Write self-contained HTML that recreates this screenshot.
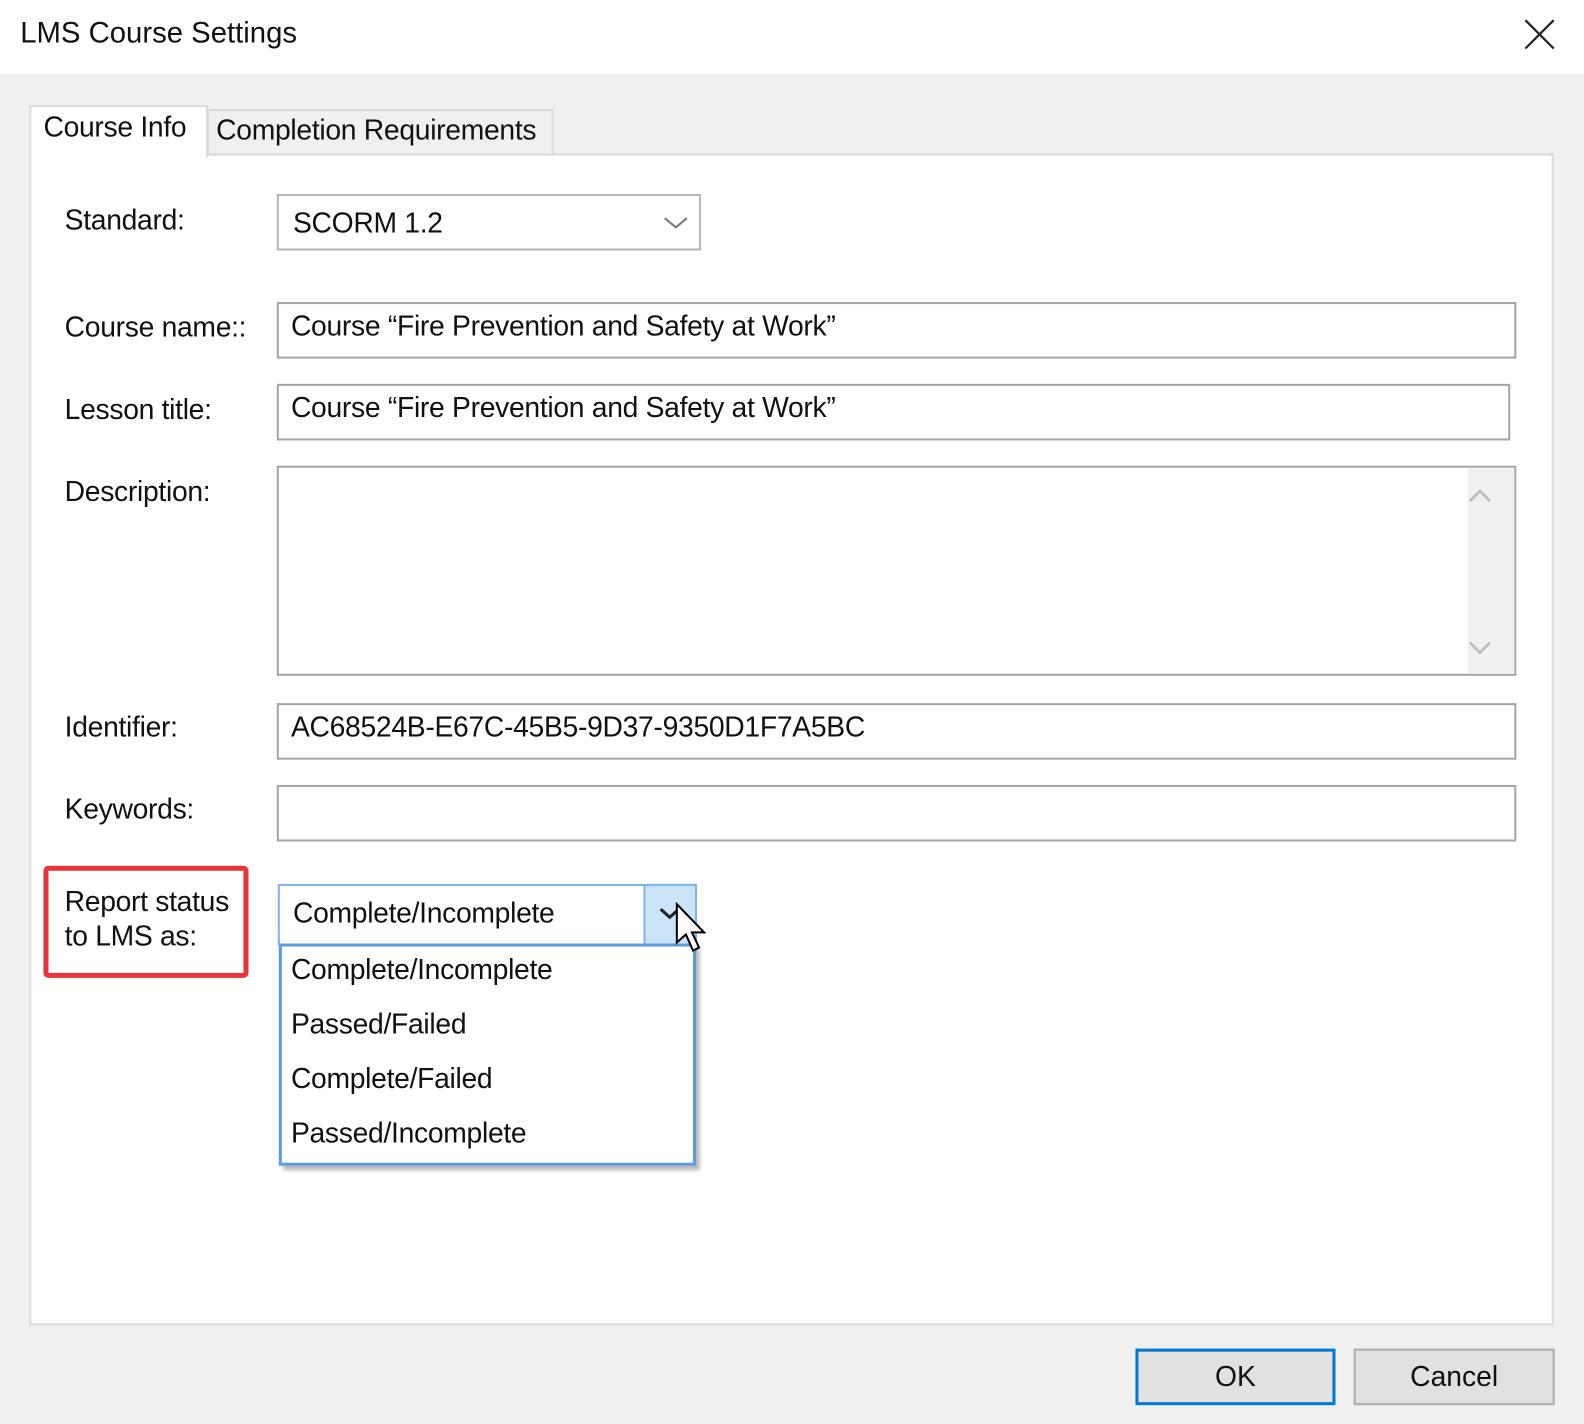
<!DOCTYPE html>
<html><head><style>
*{box-sizing:border-box;margin:0;padding:0}
body{width:1584px;height:1424px;background:#f0f0f0;font-family:"Liberation Sans",sans-serif;color:#111;position:relative;overflow:hidden;font-size:28px}
#w{position:absolute;left:0;top:0;width:1568px;height:1410px;transform:scale(1.0102);transform-origin:0 0}
.a{position:absolute;white-space:nowrap}
.box{position:absolute;background:#fff;border:2px solid #a5a5a5}
.lbl{position:absolute;left:64px;font-size:28px;letter-spacing:-0.3px}
.val{position:absolute;left:12px;top:6px;font-size:28px;letter-spacing:-0.3px}
</style></head><body><div id="w">
<div class="a" style="left:0;top:0;width:1584px;height:73px;background:#fff"></div>
<div class="a" style="left:20px;top:17px;font-size:29px">LMS Course Settings</div>
<svg class="a" style="left:1508px;top:18px" width="32" height="32"><path d="M2 2L30 30M30 2L2 30" stroke="#222" stroke-width="2.2"/></svg>

<div class="a" style="left:205px;top:108px;width:343px;height:46px;background:#f0f0f0;border:2px solid #dadada;border-bottom:none"></div>
<div class="a" style="left:214px;top:113px;font-size:28px;letter-spacing:-0.3px">Completion Requirements</div>
<div class="a" style="left:29px;top:152px;width:1509px;height:1160px;background:#fff;border:2px solid #dadada"></div>
<div class="a" style="left:29px;top:104px;width:177px;height:52px;background:#fff;border:2px solid #dadada;border-bottom:none"></div>
<div class="a" style="left:43px;top:110px;font-size:28px;letter-spacing:-0.3px">Course Info</div>

<div class="lbl" style="top:202px">Standard:</div>
<div class="box" style="left:274px;top:192px;width:420px;height:56px;border-color:#b5b5b5"><div class="val" style="left:14px;top:11px">SCORM 1.2</div>
<svg class="a" style="left:380px;top:20px" width="26" height="14"><path d="M2 2L13 11L24 2" stroke="#777" stroke-width="2" fill="none"/></svg></div>

<div class="lbl" style="top:308px">Course name::</div>
<div class="box" style="left:274px;top:299px;width:1227px;height:56px"><div class="val">Course “Fire Prevention and Safety at Work”</div></div>
<div class="lbl" style="top:390px">Lesson title:</div>
<div class="box" style="left:274px;top:380px;width:1221px;height:56px"><div class="val">Course “Fire Prevention and Safety at Work”</div></div>
<div class="lbl" style="top:471px">Description:</div>
<div class="box" style="left:274px;top:461px;width:1227px;height:208px">
<div class="a" style="right:0;top:0;width:46px;height:204px;background:#f0f0f0"></div>
<svg class="a" style="left:1176px;top:20px" width="26" height="16"><path d="M3 13L13 3L23 13" stroke="#bbb" stroke-width="2.5" fill="none"/></svg>
<svg class="a" style="left:1176px;top:170px" width="26" height="16"><path d="M3 3L13 13L23 3" stroke="#bbb" stroke-width="2.5" fill="none"/></svg>
</div>
<div class="lbl" style="top:704px">Identifier:</div>
<div class="box" style="left:274px;top:696px;width:1227px;height:56px"><div class="val">AC68524B-E67C-45B5-9D37-9350D1F7A5BC</div></div>
<div class="lbl" style="top:785px">Keywords:</div>
<div class="box" style="left:274px;top:777px;width:1227px;height:56px"></div>

<div class="a" style="left:43px;top:857px;width:203px;height:111px;border:5px solid #e8343a;border-radius:5px"></div>
<div class="a" style="left:64px;top:876px;font-size:28px;line-height:34px;letter-spacing:-0.3px">Report status<br>to LMS as:</div>

<div class="a" style="left:275px;top:875px;width:415px;height:61px;background:#fff;border:2px solid #7eb4ea"></div>
<div class="a" style="left:637px;top:875px;width:53px;height:61px;background:#cce4f7;border:2px solid #7eb4ea"></div>
<div class="a" style="left:290px;top:888px;font-size:28px;letter-spacing:-0.3px">Complete/Incomplete</div>
<svg class="a" style="left:652px;top:897px" width="22" height="14"><path d="M2 3L11 11L20 3" stroke="#222" stroke-width="3" fill="none"/></svg>
<div class="a" style="left:276px;top:934px;width:413px;height:220px;background:#fff;border:3px solid #5b9be0;box-shadow:4px 4px 4px rgba(0,0,0,.3)"></div>
<div class="a" style="left:288px;top:933px;font-size:28px;line-height:54px;letter-spacing:-0.3px">Complete/Incomplete<br>Passed/Failed<br>Complete/Failed<br>Passed/Incomplete</div>
<svg class="a" style="left:668px;top:893px" width="38" height="52"><path d="M2 2L2 40L11 32L18 48L24 45L17 30L29 30Z" fill="#fff" stroke="#000" stroke-width="2"/></svg>

<div class="a" style="left:1124px;top:1335px;width:198px;height:56px;background:#e1e1e1;border:3px solid #0078d7"></div>
<div class="a" style="left:1124px;top:1347px;width:198px;text-align:center;font-size:28px">OK</div>
<div class="a" style="left:1340px;top:1335px;width:199px;height:56px;background:#e1e1e1;border:2px solid #adadad"></div>
<div class="a" style="left:1340px;top:1347px;width:199px;text-align:center;font-size:28px">Cancel</div>
</div></body></html>
